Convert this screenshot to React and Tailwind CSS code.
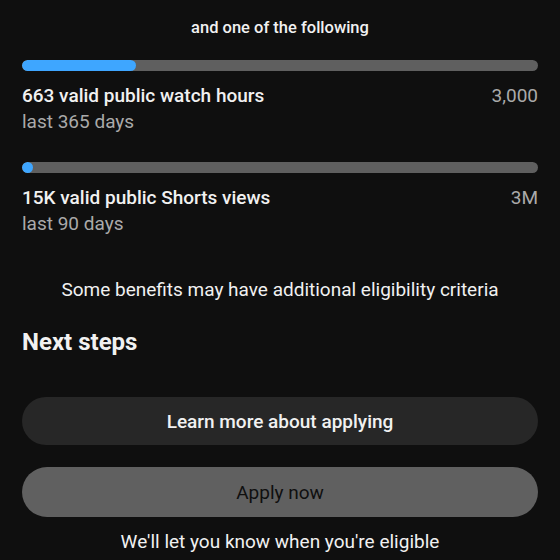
const Progress = ({ pct }) => (
  <div className="h-[11px] w-full rounded-full bg-[#5f5f5f] overflow-hidden">
    <div className="h-full rounded-full bg-[#3ea6ff]" style={{ width: pct }} />
  </div>
);

const Requirement = ({ pct, label, period, goal }) => (
  <div>
    <Progress pct={pct} />
    <div className="mt-[12px] flex items-start justify-between">
      <div>
        <div className="text-[19px] leading-[26px] font-medium text-[#f1f1f1]">{label}</div>
        <div className="text-[19px] leading-[26px] text-[#aaaaaa]">{period}</div>
      </div>
      <div className="text-[19px] leading-[26px] text-[#aaaaaa]">{goal}</div>
    </div>
  </div>
);

export default function App() {
  return (
    <div
      className="min-h-[560px] w-[560px] bg-[#0f0f0f] px-[22px] pt-[16px] text-[#f1f1f1] overflow-hidden"
      style={{ fontFamily: "Roboto, 'Liberation Sans', sans-serif" }}
    >
      <p className="text-center text-[16.5px] leading-6 font-medium">and one of the following</p>

      <div className="mt-[20px]">
        <Requirement pct="22%" label="663 valid public watch hours" period="last 365 days" goal="3,000" />
      </div>
      <div className="mt-[27px]">
        <Requirement pct="11px" label="15K valid public Shorts views" period="last 90 days" goal="3M" />
      </div>

      <p className="mt-[40px] text-center text-[19px] leading-[26px]">
        Some benefits may have additional eligibility criteria
      </p>

      <h2 className="mt-[24px] text-[24px] leading-[30px] font-bold">Next steps</h2>

      <button className="mt-[40px] flex h-[48px] w-full items-center justify-center rounded-full bg-[#272727] pt-[2px] text-[19px] font-medium text-[#f1f1f1]">
        Learn more about applying
      </button>
      <button className="mt-[22px] flex h-[50px] w-full items-center justify-center rounded-full bg-[#606060] pt-[2px] text-[19px] text-[#0f0f0f]">
        Apply now
      </button>

      <p className="mt-[13px] text-center text-[19px] leading-6">We'll let you know when you're eligible</p>
    </div>
  );
}
